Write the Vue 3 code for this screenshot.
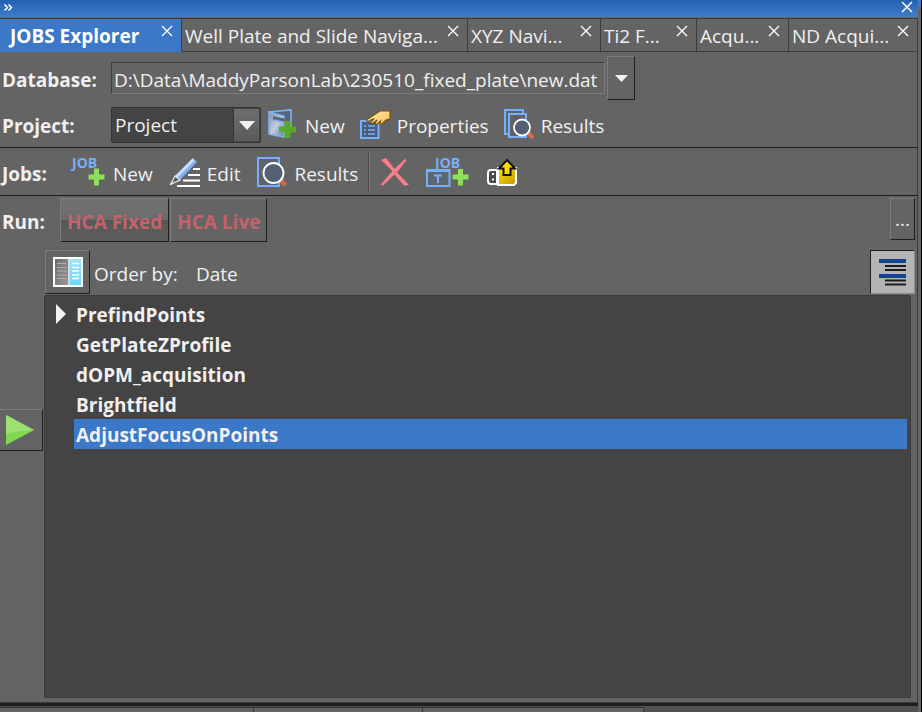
<script setup>
import { ref } from 'vue'

const tabs = [
  { title: 'JOBS Explorer' },
  { title: 'Well Plate and Slide Naviga...' },
  { title: 'XYZ Navi...' },
  { title: 'Ti2 F...' },
  { title: 'Acqu...' },
  { title: 'ND Acqui...' },
]
const activeTab = ref(0)
const database = ref('D:\\Data\\MaddyParsonLab\\230510_fixed_plate\\new.dat')
const project = ref('Project')
const jobs = [
  { name: 'PrefindPoints', expandable: true },
  { name: 'GetPlateZProfile' },
  { name: 'dOPM_acquisition' },
  { name: 'Brightfield' },
  { name: 'AdjustFocusOnPoints' },
]
const selected = ref(4)
</script>

<template>
  <div class="window">
    <div class="panel">
      <header class="titlebar">
        <svg class="chevrons" width="8" height="7" viewBox="0 0 8 7"><path d="M.5 .5l3 3-3 3M4.500 .5l3 3-3 3" fill="none" stroke="#fff" stroke-width="1.500" /></svg>
        <button class="bare" aria-label="Close panel">
          <svg width="12" height="12" viewBox="0 0 12 12"><path d="M1 1l10 10M11 1L1 11" stroke="#fff" stroke-width="1.500" /></svg>
        </button>
      </header>

      <nav class="tabs">
        <div v-for="(tab, i) in tabs" :key="tab.title" class="tab" :class="{ active: i === activeTab }">
          <button class="bare tab-title" @click="activeTab = i">{{ tab.title }}</button>
          <button class="bare tab-close" :aria-label="'Close ' + tab.title">
            <svg width="12" height="12" viewBox="0 0 12 12"><path d="M1 1l10 10M11 1L1 11" stroke="#fff" stroke-width="1.300" /></svg>
          </button>
        </div>
      </nav>

      <div class="row database">
        <label class="label wide" for="db">Database:</label>
        <input id="db" v-model="database" class="path" type="text" readonly />
        <button class="raised drop" aria-label="Choose database">
          <svg width="13" height="7" viewBox="0 0 13 7"><path d="M0 0h13L6.500 7z" fill="#f2f2f2" /></svg>
        </button>
      </div>

      <div class="row project">
        <label class="label wide" for="project">Project:</label>
        <div class="combo">
          <select id="project" v-model="project"><option>Project</option></select>
          <span class="combo-arrow">
            <svg width="16" height="9" viewBox="0 0 16 9"><path d="M0 0h16L8 9z" fill="#f2f2f2" /></svg>
          </span>
        </div>
        <div class="tools">
          <button class="bare tool">
            <svg width="30" height="30" viewBox="0 0 30 30">
              <defs>
                <linearGradient id="sheet" x1="0" y1="0" x2="1" y2="1"><stop offset="0" stop-color="#7d91b0" /><stop offset=".5" stop-color="#c3cce0" /><stop offset="1" stop-color="#7084a6" /></linearGradient>
              </defs>
              <path d="M1 3L23 1v16l-7 3V8z" fill="#56657d" stroke="#7bb2fb" stroke-width="1.600" />
              <path d="M1 3l15 4v21L1 25z" fill="url(#sheet)" stroke="#7bb2fb" stroke-width="1.600" />
              <path d="M5 7l14 3v4L5 11z" fill="#65666a" />
              <path d="M6 11l13 3" stroke="#7bb2fb" stroke-width="1.500" />
              <path d="M16.500 12h6v5.500H28v6h-5.500V29h-6v-5.500H11v-6h5.500z" fill="#59aa28" />
            </svg>
            <span>New</span>
          </button>
          <button class="bare tool">
            <svg width="30" height="30" viewBox="0 0 30 30">
              <defs>
                <linearGradient id="skin" x1="0" y1="0" x2="1" y2="1"><stop offset="0" stop-color="#ffeeb0" /><stop offset="1" stop-color="#f7bd4b" /></linearGradient>
              </defs>
              <path d="M1 12h17.500v17H1z" fill="#4c5c76" stroke="#78affb" stroke-width="2" />
              <path d="M4 17h2M4 21h2M4 25h2M8 17h7M8 21h7M8 25h7" stroke="#78affb" stroke-width="1.700" />
              <path d="M30 2H20L7 10.500c-1 1.500.500 2.300 2 1.500l5-2.500-3 4c0 1.500 1.500 1.500 2.500.500l3.500-3-2 3.500c.500 1.500 2 1 3 0l2.500-2.500-.500 2.500c1 1.500 2 .500 3-.500L26 11l4-1z" fill="url(#skin)" stroke="#715313" stroke-width="1.200" />
            </svg>
            <span>Properties</span>
          </button>
          <button class="bare tool">
            <svg width="30" height="30" viewBox="0 0 30 30">
              <path d="M1 1h18v24H1z" fill="#5c6470" stroke="#78affb" stroke-width="2" />
              <path d="M5 5h17v23H5z" fill="#606264" stroke="#78affb" stroke-width="2" />
              <path d="M23 23l6 6" stroke="#d96c43" stroke-width="4" />
              <path d="M22 24l3-3" stroke="#e9ddd7" stroke-width="2" />
              <circle cx="18" cy="18.500" r="8" fill="#536173" stroke="#fff" stroke-width="1.800" />
            </svg>
            <span>Results</span>
          </button>
        </div>
      </div>

      <div class="row jobs">
        <span class="label narrow">Jobs:</span>
        <div class="tools">
          <button class="bare tool">
            <svg width="35" height="30" viewBox="0 0 35 30">
              <text x="1" y="11" class="glyph">JOB</text>
              <path d="M22.500 11h6v6H34v6h-5.500v6h-6v-6H17v-6h5.500z" fill="#8fdf5b" stroke="#656565" stroke-width="1" />
            </svg>
            <span>New</span>
          </button>
          <button class="bare tool">
            <svg width="30" height="30" viewBox="0 0 30 30">
              <path d="M23 1l4 4L10 23l-4.500-4z" fill="#7eb0f3" />
              <path d="M22.500 1.500l2 2L7 21l-2-2z" fill="#c9e0ff" />
              <path d="M5 19l5 4-9 4z" fill="#555" stroke="#eee" stroke-width="1.200" />
              <path d="M0 28l1-3 2 2z" fill="#fff" />
              <path d="M23 12h7M18 18h12M13 23.500h17M7 29h23" stroke="#fff" stroke-width="1.800" />
            </svg>
            <span>Edit</span>
          </button>
          <button class="bare tool">
            <svg width="30" height="30" viewBox="0 0 30 30">
              <path d="M1 1h21v28H1z" fill="#5d646e" stroke="#78affb" stroke-width="2" />
              <path d="M23 23l5.500 5" stroke="#cd6b45" stroke-width="4.500" />
              <path d="M22 25l4-4" stroke="#f1aa8b" stroke-width="2" />
              <circle cx="16.500" cy="16" r="10" fill="#536173" stroke="#fff" stroke-width="1.800" />
            </svg>
            <span>Results</span>
          </button>
          <span class="separator"></span>
          <button class="bare tool" aria-label="Delete job">
            <svg width="29" height="30" viewBox="0 0 29 30">
              <path d="M1 3l5-2 8.500 11L25 2l1.500 1L17 15.500 29 28l-5 .500-9.500-11L3 28.500l-2.500-.500L12.500 14z" fill="#ff7d8b" />
            </svg>
          </button>
          <button class="bare tool" aria-label="New job from template">
            <svg width="44" height="30" viewBox="0 0 44 30">
              <text x="9" y="11" class="glyph">JOB</text>
              <path d="M1 13h22.500v16H1z" fill="#5d6673" stroke="#78affb" stroke-width="2" />
              <path d="M0 12h24v3H0z" fill="#78affb" />
              <path d="M8 18.500h8M12 18.500V26" stroke="#78affb" stroke-width="2" />
              <path d="M31.500 11.500h6V17H43v6h-5.500v6h-6v-6H26v-6h5.500z" fill="#8fdf5b" stroke="#656565" stroke-width="1" />
            </svg>
          </button>
          <button class="bare tool" aria-label="Export job">
            <svg width="31" height="30" viewBox="0 0 31 30">
              <defs><linearGradient id="gold" x1="0" y1="0" x2="1" y2="1"><stop offset="0" stop-color="#ffe000" /><stop offset="1" stop-color="#bd9a00" /></linearGradient></defs>
              <path d="M10 13H4q-3 0-3 3v8q0 3 3 3h6z" fill="#4b4b4b" stroke="#fff" stroke-width="2" />
              <path d="M5 17h2M5 22.500h2" stroke="#fff" stroke-width="2" />
              <path d="M11 11h18v15l-2 2H11z" fill="url(#gold)" stroke="#fff" stroke-width="2" />
              <path d="M20 3l8 8.500h-4.500V18h-7v-6.500H12z" fill="#ffd900" stroke="#111" stroke-width="2" />
            </svg>
          </button>
        </div>
      </div>

      <div class="row run">
        <span class="label narrow">Run:</span>
        <button class="raised macro hot">HCA Fixed</button>
        <button class="raised macro">HCA Live</button>
        <button class="raised more" aria-label="More run options">...</button>
      </div>

      <div class="content">
        <button class="raised play" aria-label="Run job">
          <svg width="28" height="30" viewBox="0 0 28 30"><path d="M0 0l28 15L0 30z" fill="#83d84f" /><path d="M0 0l28 15Q12 16 0 19z" fill="#9be070" /></svg>
        </button>
        <div class="order">
          <button class="raised square" aria-label="Toggle columns">
            <svg width="30" height="30" viewBox="0 0 30 30">
              <defs>
                <linearGradient id="grayPage" x1="0" y1="0" x2="1" y2="1"><stop offset="0" stop-color="#6b6b6b" /><stop offset="1" stop-color="#9a9a9a" /></linearGradient>
                <linearGradient id="bluePage" x1="0" y1="0" x2="0" y2="1"><stop offset="0" stop-color="#a3e3fb" /><stop offset="1" stop-color="#68d7ff" /></linearGradient>
              </defs>
              <path d="M0 0h30v30H0z" fill="#fff" />
              <path d="M2 2h13v26H2z" fill="url(#grayPage)" />
              <path d="M15 2h2v26h-2z" fill="#d8d8d8" />
              <path d="M17 2h11v26H17z" fill="url(#bluePage)" />
              <path d="M4 6.500h9M4 10.500h9M4 14h9M4 18h9M4 21.500h9" stroke="#b0b0b0" stroke-width="1" />
              <path d="M19 6.500h7M19 10.500h7M19 14h7M19 18h7M19 21.500h7" stroke="#fff" stroke-width="1.500" />
            </svg>
          </button>
          <span class="order-label">Order by:</span>
          <button class="bare order-value">Date</button>
          <button class="square pressed" aria-label="Toggle details">
            <svg width="28" height="28" viewBox="0 0 28 28">
              <path d="M0 3h27M0 18h27" stroke="#11448a" stroke-width="4" />
              <path d="M6 8h21M6 12h21M6 22.500h21M6 26.500h21" stroke="#1c1c1c" stroke-width="2" />
            </svg>
          </button>
        </div>
        <ul class="list">
          <li v-for="(job, i) in jobs" :key="job.name">
            <span class="twisty"><svg v-if="job.expandable" width="10" height="20" viewBox="0 0 10 20"><path d="M0 0l10 10L0 20z" fill="#f2f2f2" /></svg></span>
            <button class="bare job" :class="{ selected: i === selected }" @click="selected = i">{{ job.name }}</button>
          </li>
        </ul>
      </div>

      <footer class="dock"><span></span><span></span><span></span></footer>
    </div>
    <div class="edge"></div>
  </div>
</template>

<style>
body { background: #646464; }
</style>

<style scoped>
* { box-sizing: border-box; }
button, input, select { font: inherit; color: inherit; font-variant-ligatures: none; margin: 0; }
.window {
  display: flex;
  min-height: 100vh;
  background: #646464;
  color: #f0f0f0;
  font: 19px/28px "Open Sans", "Noto Sans", sans-serif;
  font-variant-ligatures: none;
}
.panel { flex: 1; min-width: 0; display: flex; flex-direction: column; }
.edge { width: 4px; border-right: 1px solid #000; background: linear-gradient(#3c79c8 7px, #646464 7px); }
.bare { border: 0; padding: 0; background: none; display: flex; align-items: center; white-space: nowrap; }
svg { display: block; flex: none; overflow: visible; }
.raised {
  display: flex; align-items: center; justify-content: center; padding: 0;
  background: #646464; border: 1px solid; border-color: #7c7c7c #1e1e1e #1e1e1e #7c7c7c;
}
.titlebar {
  height: 18px; flex: none; display: flex; justify-content: space-between; align-items: center;
  padding: 0 5px 4px 4px; background: linear-gradient(#2461b0, #3f7cca 17px, #646464 17px);
}
.tabs {
  flex: none; height: 33px; display: grid; grid-template-columns: 182fr 286fr 133fr 96fr 92fr 129fr;
  border-top: 1px solid #3c3c3c;
}
.tab {
  display: flex; align-items: flex-start; justify-content: space-between; min-width: 0;
  padding: 0 8px 0 3px; border-right: 1px solid #3c3c3c; border-bottom: 1px solid #3c3c3c;
}
.tab.active { background: #3b78c8; color: #fff; border-bottom-color: #3b78c8; padding-left: 10px; }
.active .tab-title { font-weight: 700; }
.tab-title { height: 32px; padding-top: 2px; }
.tab-close { margin-top: 6px; }
.row { display: flex; align-items: center; flex: none; border-right: 1px solid #3c3c3c; }
.label { font-weight: 700; padding-left: 2px; flex: none; white-space: nowrap; }
.wide { width: 111px; }
.narrow { width: 60px; }
.database { height: 54px; }
.database .label { padding-top: 4px; }
.path {
  width: 494px; height: 32px; padding: 4px 2px 0; background: none; outline: 0;
  border: 1px solid; border-color: #3c3c3c #7c7c7c #7c7c7c #3c3c3c;
}
.drop { width: 28px; height: 44px; margin-left: 2px; }
.project { height: 43px; border-bottom: 1px solid #1e1e1e; }
.combo { position: relative; width: 150px; height: 36px; }
.project .combo { margin-bottom: 2px; }
.combo select {
  appearance: none; width: 100%; height: 100%; padding: 0 30px 0 3px; outline: 0;
  background: #444; border: 1px solid #333; border-radius: 2px;
}
.combo-arrow {
  position: absolute; top: 2px; right: 2px; bottom: 2px; width: 26px; pointer-events: none;
  display: flex; align-items: center; justify-content: center;
  background: linear-gradient(#6e6e6e, #5a5a5a); border-left: 1px solid #333;
}
.tools { display: flex; align-items: center; gap: 17px; }
.project .tools { margin-left: 7px; gap: 15px; }
.project .tool svg { margin-bottom: 4px; }
.jobs .tools { margin-left: 11px; }
.jobs .label, .jobs .tool span { padding-top: 4px; }
.tool { gap: 7px; }
.jobs { height: 48px; border-bottom: 1px solid #1e1e1e; }
.glyph { font: 700 14px "Open Sans", sans-serif; fill: #78affb; }
.separator { width: 2px; height: 42px; margin: 0 -7px; background: linear-gradient(90deg, #4a4a4a 1px, #7c7c7c 1px); }
.run { height: 54px; padding-right: 2px; align-items: flex-start; padding-top: 2px; }
.run .label { line-height: 48px; }
.macro { height: 44px; padding: 4px 6px 0; margin-right: 1px; color: #c4636b; font-weight: 700; }
.hot { background: linear-gradient(#727272, #6c6c6c 50%, #585858 50%, #5e5e5e); }
.more { width: 25px; height: 42px; margin-left: auto; }
.content {
  flex: 1; display: grid; grid-template-columns: 44px 1fr; grid-template-rows: 45px 1fr;
  padding: 0 6px 4px 0; border-right: 1px solid #3c3c3c; border-bottom: 1px solid #3c3c3c;
}
.play { grid-row: 1 / 3; align-self: start; width: 43px; height: 42px; margin-top: 159px; border-left: 0; }
.play svg { margin-right: 2px; }
.order { grid-column: 2; display: flex; padding-left: 1px; margin-right: -4px; }
.square { width: 45px; height: 44px; flex: none; }
.order-label { line-height: 48px; margin-left: 4px; width: 102px; }
.order-value { height: 48px; }
.pressed {
  margin-left: auto; display: flex; align-items: center; justify-content: center; padding: 0;
  background: #b4b4b4; border: 1px solid; border-color: #1e1e1e #8c8c8c #8c8c8c #1e1e1e;
}
.list {
  grid-column: 2; list-style: none; margin: 0; padding: 3px; background: #444;
  border: 1px solid #3a3a3a; border-radius: 2px;
}
.list li { display: flex; height: 30px; }
.twisty { width: 26px; padding: 5px 0 0 8px; flex: none; }
.job { flex: 1; padding: 2px 0 0 2px; height: 30px; font-weight: 700; }
.selected { background: #3b78c8; }
.dock {
  flex: none; height: 9px; padding-top: 4px; display: grid; grid-template-columns: 254fr 169fr 221fr 274fr;
  background: linear-gradient(#1f1f1f 3px, #505050 3px);
}
.dock span { background: #646464; border-top: 1px solid #333; border-right: 1px solid #3a3a3a; }
</style>
